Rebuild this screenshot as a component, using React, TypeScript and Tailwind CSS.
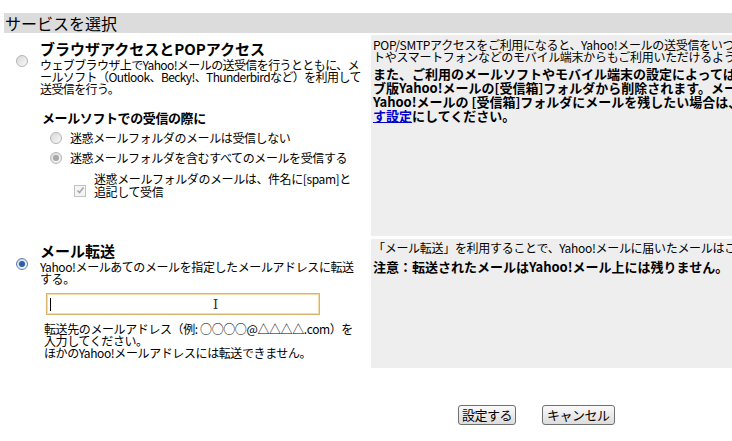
import React from "react";

const font = {
  fontFamily: '"MS PGothic", "Noto Sans CJK JP", "Noto Sans", sans-serif',
};

function Radio({ checked, disabled }: { checked?: boolean; disabled?: boolean }) {
  return (
    <span
      className={`inline-flex h-[12px] w-[12px] shrink-0 items-center justify-center rounded-full border ${
        disabled ? "border-[#b4b4b4] bg-gradient-to-br from-[#d8d8d8] to-[#f8f8f8]" : "border-[#5d7fae] bg-gradient-to-br from-[#d0d0d0] to-white"
      }`}
    >
      {checked && (
        <span
          className={`h-[6px] w-[6px] rounded-full ${
            disabled ? "bg-[#a8a8a8]" : "bg-[#2a5db5]"
          }`}
        />
      )}
    </span>
  );
}

function Checkbox() {
  return (
    <span className="inline-flex h-[12px] w-[12px] shrink-0 items-center justify-center border border-[#c2c2c2] bg-[#f4f4f4]">
      <svg width="9" height="9" viewBox="0 0 9 9">
        <path d="M1.5 4.5 L3.5 6.5 L7.5 1.5" stroke="#a8a8a8" strokeWidth="1.6" fill="none" />
      </svg>
    </span>
  );
}

export default function App() {
  return (
    <div className="h-[441px] w-[732px] overflow-hidden bg-white text-black" style={font}>
      <div className="pt-[13px] pl-[4px]">
        <div className="h-[20px] bg-[#dcdcdc] pl-[1px] text-[16px] leading-[20px]">サービスを選択</div>
      </div>

      <div className="mt-[2px] grid grid-cols-[367px_600px] gap-x-[4px] gap-y-[3px]">
        {/* row 1 left */}
        <div className="flex h-[201px] gap-[12px] pl-[16px] pt-[4px]">
          <div className="pt-[9px]">
            <Radio disabled />
          </div>
          <div className="whitespace-nowrap">
            <div className="text-[15px] font-bold leading-[20px]">ブラウザアクセスとPOPアクセス</div>
            <div className="text-[12px] leading-[12px] tracking-[-0.6px]">
              ウェブブラウザ上でYahoo!メールの送受信を行うとともに、メ
              <br />
              ールソフト（Outlook、Becky!、Thunderbirdなど）を利用して
              <br />
              送受信を行う。
            </div>
            <div className="mt-[15px] pl-[2px] text-[13px] font-bold leading-[16px] tracking-[-0.4px]">
              メールソフトでの受信の際に
            </div>
            <div className="mt-[2px] flex items-center gap-[8px] pl-[10px]">
              <Radio disabled />
              <span className="text-[12px] leading-[20px] tracking-[-0.4px]">迷惑メールフォルダのメールは受信しない</span>
            </div>
            <div className="flex items-center gap-[8px] pl-[10px]">
              <Radio checked disabled />
              <span className="text-[12px] leading-[20px] tracking-[-0.4px]">
                迷惑メールフォルダを含むすべてのメールを受信する
              </span>
            </div>
            <div className="mt-[4px] flex gap-[8px] pl-[34px]">
              <div className="pt-[4px]">
                <Checkbox />
              </div>
              <span className="text-[12px] leading-[13px] tracking-[-0.4px]">
                迷惑メールフォルダのメールは、件名に[spam]と
                <br />
                追記して受信
              </span>
            </div>
          </div>
        </div>

        {/* row 1 right */}
        <div className="h-[201px] whitespace-nowrap bg-[#eeeeee] pl-[2px] pt-[4px]">
          <div className="text-[12px] leading-[12px] tracking-[-0.3px]">
            POP/SMTPアクセスをご利用になると、Yahoo!メールの送受信をいつものメールソフ
            <br />
            トやスマートフォンなどのモバイル端末からもご利用いただけるようになります。
          </div>
          <div className="mt-[4px] text-[13px] font-bold leading-[14px]">
            また、ご利用のメールソフトやモバイル端末の設定によっては、受信したメールがウェ
            <br />
            ブ版Yahoo!メールの[受信箱]フォルダから削除されます。メールソフトで受信後も
            <br />
            Yahoo!メールの [受信箱]フォルダにメールを残したい場合は、サーバーにメールを残
            <br />
            <a href="#" className="text-[#0000cc] underline">
              す設定
            </a>
            にしてください。
          </div>
        </div>

        {/* row 2 left */}
        <div className="flex h-[129px] gap-[12px] pl-[16px] pt-[2px]">
          <div className="pt-[7px]">
            <Radio checked />
          </div>
          <div className="whitespace-nowrap">
            <div className="text-[15px] font-bold leading-[20px]">メール転送</div>
            <div className="text-[12px] leading-[12px] tracking-[-0.4px]">
              Yahoo!メールあてのメールを指定したメールアドレスに転送
              <br />
              する。
            </div>
            <div className="relative ml-[6px] mt-[8px] h-[22px] w-[274px] border border-[#d9b46a] bg-white shadow-[inset_0_0_0_1px_#f3dca8]">
              <span className="absolute left-[3px] top-[4px] h-[13px] w-[1px] bg-black" />
              <span className="absolute left-[166px] top-[2px] font-serif text-[15px] leading-[16px] text-[#333]">I</span>
            </div>
            <div className="mt-[8px] pl-[4px] text-[12px] leading-[12px] tracking-[-0.4px]">
              転送先のメールアドレス（例: ○○○○@△△△△.com）を
              <br />
              入力してください。
              <br />
              ほかのYahoo!メールアドレスには転送できません。
            </div>
          </div>
        </div>

        {/* row 2 right */}
        <div className="h-[129px] whitespace-nowrap bg-[#eeeeee] pl-[2px] pt-[2px]">
          <div className="text-[12px] leading-[14px] tracking-[-0.3px]">
            「メール転送」を利用することで、Yahoo!メールに届いたメールはここで指定したアドレスに自動的に転送されます。
          </div>
          <div className="mt-[5px] text-[13px] font-bold leading-[14px]">
            注意：転送されたメールはYahoo!メール上には残りません。
          </div>
        </div>
      </div>

      <div className="mt-[37px] flex gap-[26px] pl-[458px]">
        <button className="h-[20px] rounded-[3px] border border-[#707070] bg-gradient-to-b from-[#fafafa] to-[#dcdcdc] px-[3px] text-[13px] leading-[16px] tracking-[-0.5px]">
          設定する
        </button>
        <button className="h-[20px] rounded-[3px] border border-[#707070] bg-gradient-to-b from-[#fafafa] to-[#dcdcdc] px-[4px] text-[13px] leading-[16px] tracking-[-0.5px]">
          キャンセル
        </button>
      </div>
    </div>
  );
}
